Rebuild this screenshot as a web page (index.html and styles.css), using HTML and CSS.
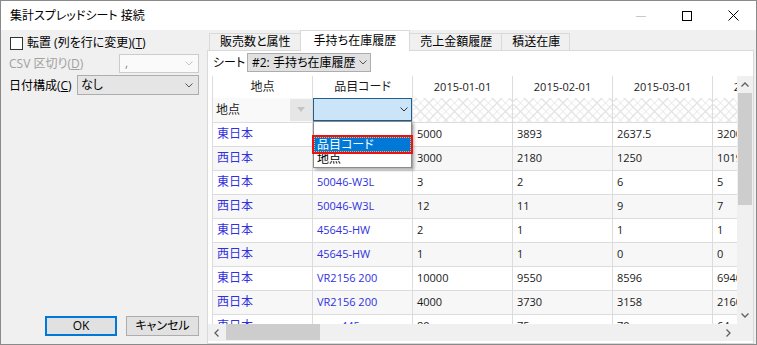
FILE: index.html
```html
<!DOCTYPE html>
<html lang="ja">
<head>
  <meta charset="UTF-8" />
  <title>集計スプレッドシート 接続</title>
  <link rel="stylesheet" href="styles.css">
</head>
<body>
  <div class="window">
    <div class="titlebar">
      <span class="title">集計スプレッドシート 接続</span>
      <div class="caption-btns">
        <span class="caption-btn"><svg width="10" height="10" viewBox="0 0 10 10"><path d="M0 5.5h10" stroke="#c8c8c8"/></svg></span>
        <span class="caption-btn"><svg width="10" height="10" viewBox="0 0 10 10"><rect x="0.5" y="0.5" width="9" height="9" fill="none" stroke="#000"/></svg></span>
        <span class="caption-btn"><svg width="11" height="11" viewBox="0 0 11 11"><path d="M0.5 0.5L10.5 10.5M10.5 0.5L0.5 10.5" stroke="#000"/></svg></span>
      </div>
    </div>

    <div class="body">
      <!-- left options -->
      <aside class="options">
        <label class="check-row"><span class="checkbox"></span>転置 (列を行に変更)(<u>T</u>)</label>

        <div class="field disabled">
          <span>CSV 区切り(<u>D</u>)</span>
          <div class="combo combo-csv">
            <span>,</span>
            <svg class="chev" width="8" height="5" viewBox="0 0 8 5"><path d="M0.5 0.5L4 4L7.5 0.5" fill="none" stroke="#c4c4c4"/></svg>
          </div>
        </div>

        <div class="field">
          <span>日付構成(<u>C</u>)</span>
          <div class="combo combo-date">
            <span>なし</span>
            <svg class="chev" width="8" height="5" viewBox="0 0 8 5"><path d="M0.5 0.5L4 4L7.5 0.5" fill="none" stroke="#555"/></svg>
          </div>
        </div>

        <div class="buttons">
          <button class="btn btn-default">OK</button>
          <button class="btn">キャンセル</button>
        </div>
      </aside>

      <!-- sheet tabs -->
      <section class="tabs">
        <div class="tab-strip">
          <span class="tab">販売数と属性</span>
          <span class="tab active">手持ち在庫履歴</span>
          <span class="tab">売上金額履歴</span>
          <span class="tab">積送在庫</span>
        </div>

        <div class="tab-panel">
          <div class="sheet-row">
            <span class="sheet-label">シート</span>
            <div class="sheet-combo">
              <span>#2: 手持ち在庫履歴</span>
              <svg class="chev" width="8" height="5" viewBox="0 0 8 5"><path d="M0.5 0.5L4 4L7.5 0.5" fill="none" stroke="#555"/></svg>
            </div>
          </div>

          <div class="grid-wrap">
            <div class="grid-main">
              <div class="grid-view">
                <table class="grid">
                  <colgroup>
                    <col><col><col><col><col><col>
                  </colgroup>
                  <thead>
                    <tr class="head-row">
                      <th>地点</th>
                      <th>品目コード</th>
                      <th class="lat">2015-01-01</th>
                      <th class="lat">2015-02-01</th>
                      <th class="lat">2015-03-01</th>
                      <th class="lat">2015-04-01</th>
                    </tr>
                    <tr class="filter-row">
                      <td>
                        <div class="key-cell">
                          <span>地点</span>
                          <span class="key-drop"><svg width="8" height="5" viewBox="0 0 8 5"><path d="M0 0h8L4 5z" fill="#c4c4c4"/></svg></span>
                        </div>
                      </td>
                      <td>
                        <div class="cell-combo">
                          <svg class="chev" width="8" height="5" viewBox="0 0 8 5"><path d="M0.5 0.5L4 4L7.5 0.5" fill="none" stroke="#333"/></svg>
                        </div>
                      </td>
                      <td class="hatch"></td>
                      <td class="hatch"></td>
                      <td class="hatch"></td>
                      <td class="hatch"></td>
                    </tr>
                  </thead>
                  <tbody>
                    <tr><td class="link">東日本</td><td class="link lat"></td><td class="lat">5000</td><td class="lat">3893</td><td class="lat">2637.5</td><td class="lat">3200</td></tr>
                    <tr><td class="link">西日本</td><td class="link lat"></td><td class="lat">3000</td><td class="lat">2180</td><td class="lat">1250</td><td class="lat">1019</td></tr>
                    <tr><td class="link">東日本</td><td class="link lat">50046-W3L</td><td class="lat">3</td><td class="lat">2</td><td class="lat">6</td><td class="lat">5</td></tr>
                    <tr><td class="link">西日本</td><td class="link lat">50046-W3L</td><td class="lat">12</td><td class="lat">11</td><td class="lat">9</td><td class="lat">7</td></tr>
                    <tr><td class="link">東日本</td><td class="link lat">45645-HW</td><td class="lat">2</td><td class="lat">1</td><td class="lat">1</td><td class="lat">1</td></tr>
                    <tr><td class="link">西日本</td><td class="link lat">45645-HW</td><td class="lat">1</td><td class="lat">1</td><td class="lat">0</td><td class="lat">0</td></tr>
                    <tr><td class="link">東日本</td><td class="link lat">VR2156 200</td><td class="lat">10000</td><td class="lat">9550</td><td class="lat">8596</td><td class="lat">6940</td></tr>
                    <tr><td class="link">西日本</td><td class="link lat">VR2156 200</td><td class="lat">4000</td><td class="lat">3730</td><td class="lat">3158</td><td class="lat">2160</td></tr>
                    <tr><td class="link">東日本</td><td class="link lat">mm-445</td><td class="lat">80</td><td class="lat">75</td><td class="lat">70</td><td class="lat">64</td></tr>
                  </tbody>
                </table>

                <!-- open list of the 品目コード filter -->
                <ul class="drop-list">
                  <li></li>
                  <li class="picked">品目コード</li>
                  <li>地点</li>
                </ul>
              </div>

              <div class="vscroll">
                <span class="sb-btn"><svg width="8" height="5" viewBox="0 0 8 5"><path d="M0.5 4.5L4 1L7.5 4.5" fill="none" stroke="#606060" stroke-width="1.3"/></svg></span>
                <span class="vthumb"></span>
                <span class="sb-track"></span>
                <span class="sb-btn"><svg width="8" height="5" viewBox="0 0 8 5"><path d="M0.5 0.5L4 4L7.5 0.5" fill="none" stroke="#606060" stroke-width="1.3"/></svg></span>
              </div>
            </div>

            <div class="hscroll">
              <span class="sb-btn"><svg width="5" height="8" viewBox="0 0 5 8"><path d="M4.5 0.5L1 4L4.5 7.5" fill="none" stroke="#606060" stroke-width="1.3"/></svg></span>
              <span class="sb-track"><span class="hthumb"></span></span>
              <span class="sb-btn"><svg width="5" height="8" viewBox="0 0 5 8"><path d="M0.5 0.5L4 4L0.5 7.5" fill="none" stroke="#606060" stroke-width="1.3"/></svg></span>
              <span class="sb-corner"></span>
            </div>
          </div>
        </div>
      </section>
    </div>
  </div>
</body>
</html>
```

FILE: styles.css
```css
* {
  box-sizing: border-box;
}
html, body {
  margin: 0;
}
body {
  font-family: "Open Sans", "Noto Sans CJK JP", sans-serif;
  font-size: 12px;
  font-feature-settings: "palt";
  color: #000;
  background: #fff;
}
.window {
  width: 757px;
  height: 345px;
  border: 1px solid #8a8a8a;
  display: flex;
  flex-direction: column;
  background: #f0f0f0;
  overflow: hidden;
}

/* title bar */
.titlebar {
  height: 29px;
  flex: none;
  background: #fff;
  display: flex;
  align-items: center;
  padding-left: 9px;
}
.title {
  flex: 1;
  line-height: 16px;
}
.caption-btns {
  display: flex;
  height: 100%;
}
.caption-btn {
  width: 46px;
  display: flex;
  align-items: center;
  justify-content: center;
}

.body {
  flex: 1;
  display: flex;
  min-height: 0;
}

/* left side */
.options {
  width: 206px;
  flex: none;
  display: flex;
  flex-direction: column;
  padding: 6px 8px 8px 8px;
}
.check-row {
  height: 14px;
  display: flex;
  align-items: center;
  line-height: 14px;
}
.checkbox {
  width: 13px;
  height: 13px;
  border: 1px solid #333;
  background: #fff;
  margin: 0 4px 0 1px;
  flex: none;
}
.field {
  display: flex;
  align-items: center;
  justify-content: space-between;
  height: 20px;
  margin-top: 2px;
}
.check-row + .field {
  margin-top: 3px;
}
.field.disabled {
  color: #a0a0a0;
}
.combo {
  flex: none;
  height: 20px;
  display: flex;
  align-items: center;
  justify-content: space-between;
  border: 1px solid #adadad;
  background: #e5e5e5;
  padding: 0 5px 0 3px;
  line-height: 16px;
}
.combo-csv {
  width: 80px;
  height: 19px;
  background: #fafafa;
  border-color: #cccccc;
  color: #8a8a8a;
  padding-left: 5px;
}
.combo-date {
  width: 122px;
}
.buttons {
  margin-top: auto;
  display: flex;
  justify-content: flex-end;
  gap: 9px;
}
.btn {
  height: 20px;
  width: 73px;
  font: inherit;
  line-height: 16px;
  padding: 0;
  background: #e1e1e1;
  border: 1px solid #adadad;
  color: #000;
}
.btn-default {
  width: 72px;
  border: 2px solid #0078d7;
}

/* tabs */
.tabs {
  flex: 1;
  display: flex;
  flex-direction: column;
  padding-right: 2px;
  min-width: 0;
}
.tab-strip {
  height: 20px;
  flex: none;
  display: flex;
  align-items: flex-end;
  padding-left: 2px;
}
.tab {
  height: 17px;
  padding: 0 9px 0 10px;
  display: flex;
  align-items: center;
  background: #f0f0f0;
  border: 1px solid #d9d9d9;
  border-bottom: none;
  margin-right: -1px;
  line-height: 14px;
}
.tab.active {
  height: 21px;
  margin-bottom: -1px;
  padding: 0 13px 1px 13px;
  background: #fff;
  position: relative;
  z-index: 1;
}
.tab-panel {
  flex: 1;
  min-height: 0;
  min-width: 0;
  display: flex;
  flex-direction: column;
  background: #fff;
  border: 1px solid #d9d9d9;
  padding: 2px 0 2px 0;
}
.sheet-row {
  height: 19px;
  display: grid;
  grid-template-columns: 35px 124px;
  align-items: center;
  margin-left: 4px;
}
.sheet-label {
  padding-left: 1px;
  line-height: 16px;
}
.sheet-combo {
  height: 19px;
  display: flex;
  align-items: center;
  justify-content: space-between;
  border: 1px solid #adadad;
  background: #e1e1e1;
  padding: 0 3px 0 4px;
  line-height: 16px;
}

/* grid */
.grid-wrap {
  flex: 1;
  min-height: 0;
  min-width: 0;
  margin-top: 4px;
  display: flex;
  flex-direction: column;
}
.grid-main {
  flex: 1;
  min-height: 0;
  display: flex;
}
.grid-view {
  flex: 1;
  min-width: 0;
  position: relative;
  overflow: hidden;
  padding-left: 4px;
}
.grid {
  border-collapse: collapse;
  table-layout: fixed;
  width: 600px;
}
.grid col {
  width: 100px;
}
.grid th,
.grid td {
  padding: 0 4px;
  border-left: 1px solid #dcdcdc;
  border-right: 1px solid #dcdcdc;
  white-space: nowrap;
  overflow: hidden;
  text-align: left;
  line-height: 16px;
}
.grid th {
  height: 22px;
  font-weight: normal;
  text-align: center;
  color: #1a1a1a;
}
.grid td {
  height: 24px;
  border-bottom: 1px solid #dcdcdc;
  color: #1a1a1a;
}
.grid .lat {
  font-size: 11px;
}
.grid td.link {
  color: #3030e0;
}
.grid tbody tr:nth-child(even) td {
  background: #f7f7f7;
}
.filter-row td {
  padding: 0;
  background: #f9f9f9;
}
.key-cell {
  height: 22px;
  display: flex;
  align-items: center;
  justify-content: space-between;
  padding-left: 3px;
}
.key-drop {
  width: 22px;
  height: 22px;
  display: flex;
  align-items: center;
  justify-content: center;
  background: #e6e6e6;
}
.cell-combo {
  height: 23px;
  display: flex;
  align-items: center;
  justify-content: flex-end;
  padding-right: 3px;
  background: #cce4f7;
  border: 1px solid #1e5f94;
}
.grid .hatch {
  background-color: #fff;
  background-image:
    repeating-linear-gradient(45deg, #e4e4e4 0 1px, transparent 1px 6px),
    repeating-linear-gradient(-45deg, #e4e4e4 0 1px, transparent 1px 6px);
}

.drop-list {
  position: absolute;
  left: 105px;
  top: 45px;
  width: 99px;
  margin: 0;
  padding: 0;
  list-style: none;
  background: #fff;
  border: 1px solid #8c8c8c;
  box-shadow: 2px 2px 3px rgba(0, 0, 0, 0.3);
}
.drop-list li {
  height: 15px;
  line-height: 14px;
  padding-left: 3px;
  overflow: hidden;
}
.drop-list li.picked {
  background: #0078d7;
  color: #fff;
  border: 1px dotted #f5b04a;
  padding-left: 2px;
  line-height: 13px;
  outline: 2px solid #f01010;
}

/* scrollbars */
.vscroll {
  width: 16px;
  flex: none;
  display: flex;
  flex-direction: column;
  background: #f0f0f0;
}
.sb-btn {
  flex: none;
  width: 17px;
  height: 17px;
  display: flex;
  align-items: center;
  justify-content: center;
}
.vscroll .sb-btn {
  width: 16px;
}
.sb-track {
  flex: 1;
  display: flex;
}
.vthumb {
  height: 112px;
  margin: 0 1px;
  background: #cdcdcd;
}
.hscroll {
  height: 17px;
  flex: none;
  display: flex;
  background: #f0f0f0;
}
.hthumb {
  width: 94px;
  margin: 0 0 1px 1px;
  background: #cdcdcd;
}
.sb-corner {
  width: 16px;
}
```
